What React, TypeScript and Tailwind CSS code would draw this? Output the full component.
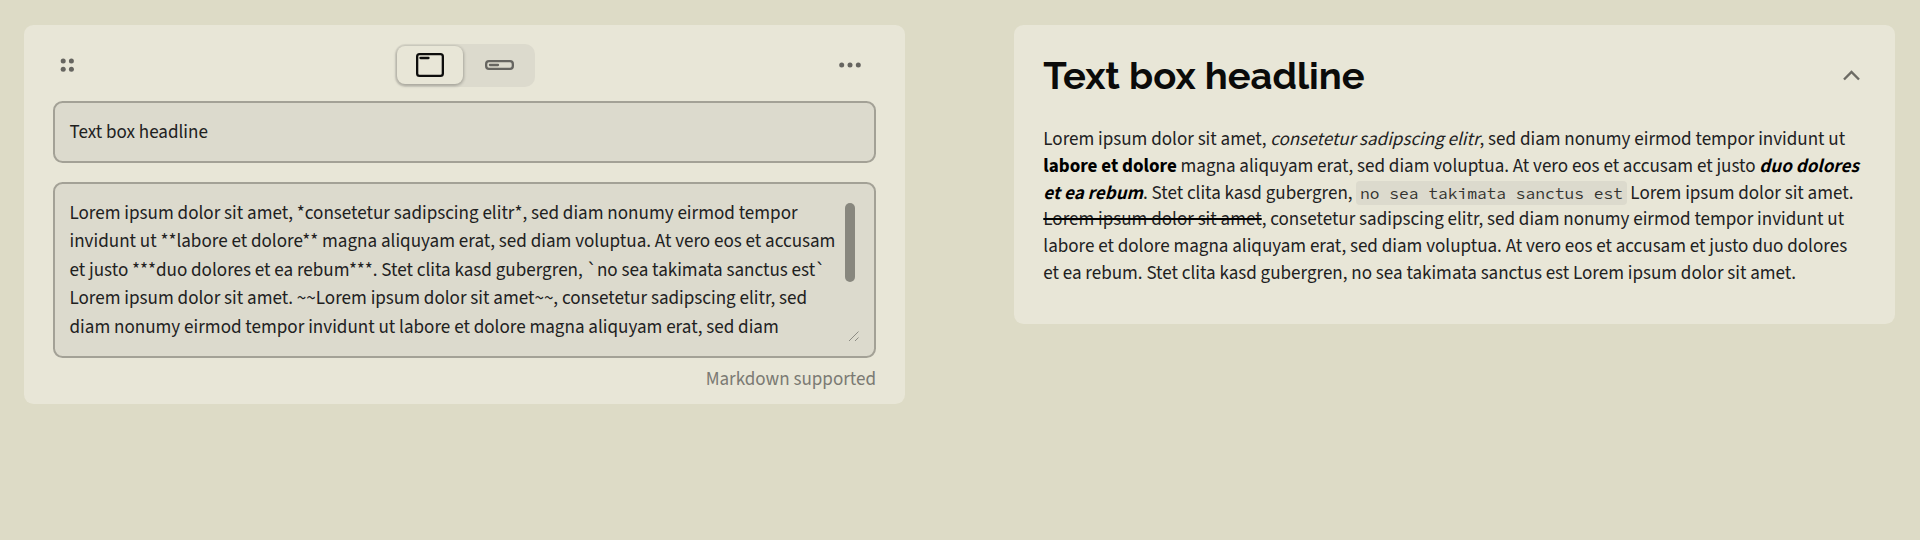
export default function App() {
  return (
    <main className="flex h-[540px] w-[1920px] items-start gap-[109.3px] overflow-hidden bg-[#dddbc6] pl-6 pt-[24.5px] font-['Source_Sans_3','Noto_Sans_CJK_SC',sans-serif] text-[19.05px] text-[#21211e]">
      <section className="flex h-[379px] w-[881px] shrink-0 flex-col rounded-[9.5px] bg-[#e8e6d7] px-[29px] pt-[19px]">
        <header className="flex h-[43px] items-center justify-between">
          <svg className="ml-[7px] size-4 fill-[#666560]" viewBox="0 0 16 16">
            <circle cx="3.2" cy="4.1" r="2.5" />
            <circle cx="11.4" cy="4.1" r="2.5" />
            <circle cx="3.2" cy="12.2" r="2.5" />
            <circle cx="11.4" cy="12.2" r="2.5" />
          </svg>
          <div className="ml-[15px] flex h-[43px] w-[140px] items-center rounded-[10px] bg-[#dcdacd] pl-[2px]">
            <button aria-label="Boxed" className="flex h-[38px] w-[66px] items-center justify-center rounded-[8px] bg-[#e8e6d7] shadow-[0_1px_3px_1px_rgba(0,0,0,0.24)]">
              <svg className="h-6 w-7" viewBox="0 0 28 24" fill="none" stroke="#0d0d0c" strokeWidth="2.3">
                <rect x="1.15" y="1.15" width="25.7" height="21.7" rx="2.4" />
                <path d="M4.5 5h8" strokeLinecap="round" />
              </svg>
            </button>
            <button aria-label="Compact" className="flex flex-1 items-center justify-center pl-[1px]">
              <svg className="h-[10px] w-[29px]" viewBox="0 0 29 10" fill="none" stroke="#666560" strokeWidth="2.3">
                <rect x="1.15" y="1.15" width="26.7" height="7.7" rx="2.8" />
                <path d="M5 5h8" strokeLinecap="round" />
              </svg>
            </button>
          </div>
          <svg className="mr-[13px] h-4 w-6 fill-[#666560]" viewBox="0 0 24 16">
            <circle cx="2.7" cy="8" r="2.5" />
            <circle cx="11" cy="8" r="2.5" />
            <circle cx="19.3" cy="8" r="2.5" />
          </svg>
        </header>
        <div className="mt-[14.5px] flex h-[62px] shrink-0 items-center rounded-[9.5px] border-2 border-[#a3a196] bg-[#dcdacd] pl-[14.5px] pt-[2.2px]">Text box headline</div>
        <div className="relative mt-[19px] h-[176px] shrink-0 whitespace-nowrap rounded-[9.5px] border-2 border-[#a3a196] bg-[#dcdacd] pl-[14.5px] pt-[14.9px] text-[19.07px] leading-[28.5px]">
          Lorem ipsum dolor sit amet, *consetetur sadipscing elitr*, sed diam nonumy eirmod tempor<br />
          invidunt ut **labore et dolore** magna aliquyam erat, sed diam voluptua. At vero eos et accusam<br />
          et justo ***duo dolores et ea rebum***. Stet clita kasd gubergren, `no sea takimata sanctus est`<br />
          Lorem ipsum dolor sit amet. ~~Lorem ipsum dolor sit amet~~, consetetur sadipscing elitr, sed<br />
          diam nonumy eirmod tempor invidunt ut labore et dolore magna aliquyam erat, sed diam
          <div className="absolute right-[19px] top-[19px] h-[79px] w-[10px] rounded-full bg-[#88877e]" />
          <svg className="absolute bottom-[14px] right-[14px] size-[12px]" viewBox="0 0 12 12" fill="none" stroke="#8d8c84">
            <path d="M1 11L10.5 1.5M7 11L10.5 7.5" />
          </svg>
        </div>
        <p className="mt-[8px] text-right text-[#7b7a73]">Markdown supported</p>
      </section>
      <section className="h-[299px] w-[880.5px] shrink-0 rounded-[9.5px] bg-[#e8e6d7] px-[29px] pt-[24px]">
        <header className="flex h-[53px] items-center justify-between">
          <h1 className="pt-[2px] font-['Raleway','Lato',sans-serif] text-[38.1px] font-bold leading-none text-[#0b0b0a]">Text box headline</h1>
          <svg className="mr-[5.5px] h-[11px] w-[17px]" viewBox="0 0 17 11" fill="none" stroke="#6c6b64" strokeWidth="2.4">
            <path d="M1 9.5L8.5 2L16 9.5" />
          </svg>
        </header>
        <p className="mt-[25.6px] whitespace-nowrap leading-[26.7px]">
          Lorem ipsum dolor sit amet, <em className="font-['Noto_Sans_CJK_SC',sans-serif] text-[17.05px] leading-none">consetetur sadipscing elitr</em>, sed diam nonumy eirmod tempor invidunt ut<br />
          <strong className="text-black">labore et dolore</strong> magna aliquyam erat, sed diam voluptua. At vero eos et accusam et justo <strong className="font-['Noto_Sans_CJK_SC',sans-serif] text-[17.05px] italic leading-none text-black">duo dolores</strong><br />
          <strong className="font-['Noto_Sans_CJK_SC',sans-serif] text-[17.05px] italic leading-none text-black">et ea rebum</strong>. Stet clita kasd gubergren, <code className="rounded-[4px] bg-[#dcdacd] px-[3.7px] py-[2px] font-['Source_Code_Pro','Liberation_Mono',monospace] text-[16.23px] leading-none text-[#33332f]">no sea takimata sanctus est</code> Lorem ipsum dolor sit amet.<br />
          <s className="decoration-black decoration-[2px]">Lorem ipsum dolor sit amet</s>, consetetur sadipscing elitr, sed diam nonumy eirmod tempor invidunt ut<br />
          labore et dolore magna aliquyam erat, sed diam voluptua. At vero eos et accusam et justo duo dolores<br />
          et ea rebum. Stet clita kasd gubergren, no sea takimata sanctus est Lorem ipsum dolor sit amet.
        </p>
      </section>
    </main>
  );
}
